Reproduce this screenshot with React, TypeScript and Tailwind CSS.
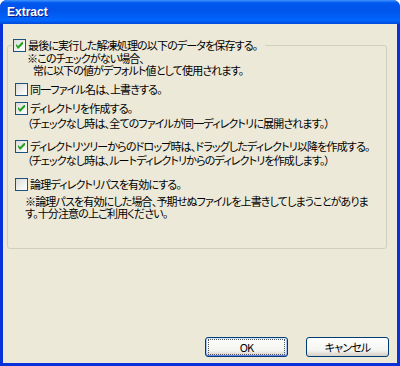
import type { ReactNode } from "react";

function XpCheckbox({ checked }: { checked: boolean }) {
  return (
    <span className="flex h-[13px] w-[13px] shrink-0 items-center justify-center border border-[#1c5180] bg-[linear-gradient(135deg,#dcdcd7,#ffffff)]">
      {checked ? (
        <svg viewBox="0 0 7 7" className="h-[7px] w-[7px]">
          <path d="M0 2 L2 4 L6 0 L7 0 L7 2 L2 7 L0 4 Z" fill="#21a121" />
        </svg>
      ) : null}
    </span>
  );
}

function CheckRow({ checked, children, className }: { checked: boolean; children: ReactNode; className?: string }) {
  return (
    <div className={`flex h-[14px] w-fit items-center gap-[2px] whitespace-nowrap ${className ?? ""}`}>
      <XpCheckbox checked={checked} />
      <span className="leading-[14px]">{children}</span>
    </div>
  );
}

function XpButton({ children, isDefault }: { children: ReactNode; isDefault?: boolean }) {
  return (
    <button
      type="button"
      className={`flex h-[20px] w-[83px] items-center justify-center rounded-[3px] border border-[#003c74] bg-[linear-gradient(180deg,#ffffff,#f3f3ef_70%,#d6d0c5)] text-[11px] leading-none text-black ${
        isDefault ? "shadow-[inset_0_1px_0_#cee7ff,inset_0_-1px_0_#6982ee,inset_1px_0_0_#a9c5f7,inset_-1px_0_0_#a9c5f7]" : ""
      }`}
    >
      {isDefault ? (
        <span className="flex h-[14px] w-[75px] items-center justify-center outline outline-1 outline-dotted outline-[#555]">{children}</span>
      ) : (
        children
      )}
    </button>
  );
}

export default function App() {
  return (
    <div className="h-[366px] w-[400px] bg-white font-['Noto_Sans_CJK_JP',sans-serif] text-[11px] tracking-[-0.85px] text-black [font-feature-settings:'palt']">
      <div className="flex h-full flex-col overflow-hidden rounded-t-[7px] bg-[#0831d9]">
        <div className="flex h-[24px] shrink-0 items-center bg-[linear-gradient(180deg,#3d95ff,#0058ee_12%,#0055eb_45%,#0066ff_85%,#0049d9)] pl-[7px] font-['Liberation_Sans',sans-serif] text-[12px] font-bold tracking-normal text-white [text-shadow:1px_1px_0_#0a1883]">
          Extract
        </div>
        <div className="mx-[3px] mb-[3px] flex flex-1 flex-col bg-[#ece9d8]">
          <div className="ml-[4px] mt-[21px] h-[204px] w-[380px] rounded-[3px] border border-[#d0d0bf]">
            <CheckRow checked className="-mt-[8px] ml-[4px] bg-[#ece9d8] pl-[1px] pr-[8px]">
              最後に実行した解凍処理の以下のデータを保存する。
            </CheckRow>
            <div className="whitespace-nowrap pl-[19px] leading-[12px]">
              <p>※このチェックがない場合、</p>
              <p className="pl-[6px]">常に以下の値がデフォルト値として使用されます。</p>
            </div>
            <CheckRow checked={false} className="ml-[7px] mt-[6px]">
              同一ファイル名は、上書きする。
            </CheckRow>
            <CheckRow checked className="ml-[7px] mt-[5px]">
              ディレクトリを作成する。
            </CheckRow>
            <p className="mt-[2px] whitespace-nowrap pl-[19px] leading-[12px]">
              （チェックなし時は、全てのファイルが同一ディレクトリに展開されます。）
            </p>
            <CheckRow checked className="ml-[7px] mt-[10px]">
              ディレクトリツリーからのドロップ時は、ドラッグしたディレクトリ以降を作成する。
            </CheckRow>
            <p className="mt-[1px] whitespace-nowrap pl-[19px] leading-[12px]">
              （チェックなし時は、ルートディレクトリからのディレクトリを作成します。）
            </p>
            <CheckRow checked={false} className="ml-[7px] mt-[11px]">
              論理ディレクトリパスを有効にする。
            </CheckRow>
            <div className="mt-[4px] whitespace-nowrap pl-[17px] leading-[12px]">
              <p>※論理パスを有効にした場合、予期せぬファイルを上書きしてしまうことがありま</p>
              <p>す。十分注意の上ご利用ください。</p>
            </div>
          </div>
          <div className="mb-[6px] mr-[8px] mt-auto flex justify-end gap-[18px]">
            <XpButton isDefault>OK</XpButton>
            <XpButton>キャンセル</XpButton>
          </div>
        </div>
      </div>
    </div>
  );
}
